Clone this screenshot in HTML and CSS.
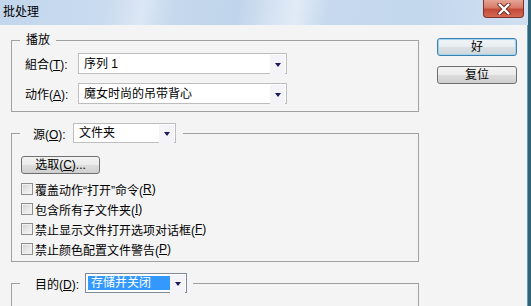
FILE: index.html
```html
<!DOCTYPE html>
<html lang="zh-CN">
<head>
    <meta charset="UTF-8">
    <title>批处理</title>
    <link rel="stylesheet" href="styles.css">
</head>
<body>
    <div class="window">
        <div class="titlebar">
            <span class="title">批处理</span>
            <div class="close-btn">
                <svg width="20" height="12" viewBox="0 0 20 12">
                    <path d="M5.5 1.5 L14.5 10.5 M14.5 1.5 L5.5 10.5" stroke="#6b2a22" stroke-width="4.2" stroke-linecap="round"/>
                    <path d="M5.5 1.5 L14.5 10.5 M14.5 1.5 L5.5 10.5" stroke="#ffffff" stroke-width="2.4" stroke-linecap="round"/>
                </svg>
            </div>
        </div>

        <div class="dialog-body">
            <div class="main-col">
                <!-- 播放 -->
                <fieldset class="group group-play">
                    <legend class="legend-text">播放</legend>
                    <div class="group-inner play-inner">
                        <div class="field-row">
                            <span class="field-label">組合(<u>T</u>):</span>
                            <div class="select select-wide">
                                <span class="select-value">序列 1</span>
                                <span class="select-arrow"></span>
                            </div>
                        </div>
                        <div class="field-row">
                            <span class="field-label">动作(<u>A</u>):</span>
                            <div class="select select-wide">
                                <span class="select-value">魔女时尚的吊带背心</span>
                                <span class="select-arrow"></span>
                            </div>
                        </div>
                    </div>
                </fieldset>

                <!-- 源 -->
                <fieldset class="group group-source">
                    <legend class="legend-field source-legend">
                        <span class="legend-label source-label">源(<u>O</u>):</span>
                        <div class="select select-source">
                            <span class="select-value">文件夹</span>
                            <span class="select-arrow"></span>
                        </div>
                    </legend>
                    <div class="group-inner source-inner">
                        <button class="btn btn-choose">选取(<u>C</u>)...</button>
                        <div class="check-list">
                            <div class="check-row"><span class="checkbox"></span>覆盖动作“打开”命令(<u>R</u>)</div>
                            <div class="check-row"><span class="checkbox"></span>包含所有子文件夹(<u>I</u>)</div>
                            <div class="check-row"><span class="checkbox"></span>禁止显示文件打开选项对话框(<u>F</u>)</div>
                            <div class="check-row"><span class="checkbox"></span>禁止颜色配置文件警告(<u>P</u>)</div>
                        </div>
                    </div>
                </fieldset>

                <!-- 目的 -->
                <fieldset class="group group-dest">
                    <legend class="legend-field dest-legend">
                        <span class="legend-label dest-label">目的(<u>D</u>):</span>
                        <div class="select select-dest">
                            <span class="select-value selected">存储并关闭</span>
                            <span class="select-arrow"></span>
                        </div>
                    </legend>
                    <div class="group-inner dest-inner"></div>
                </fieldset>
            </div>

            <div class="side-col">
                <button class="btn btn-side btn-default">好</button>
                <button class="btn btn-side">复位</button>
            </div>
        </div>
    </div>
</body>
</html>
```

FILE: styles.css
```css
* {
    box-sizing: border-box;
    margin: 0;
    padding: 0;
}

body {
    font-family: "Liberation Sans", "Noto Sans CJK SC", sans-serif;
    font-size: 12px;
    color: #000000;
    background: #f4f4f4;
    width: 531px;
    height: 306px;
    overflow: hidden;
}

u {
    text-decoration: underline;
    text-underline-offset: 1px;
}

.window {
    width: 531px;
    height: 306px;
    background: #f4f4f4;
    border-right: 3px solid #2f6478;
    box-shadow: inset -1px 0 0 #5fa0b8;
    overflow: hidden;
}

/* Title bar */
.titlebar {
    height: 25px;
    display: flex;
    justify-content: space-between;
    align-items: flex-start;
    background: linear-gradient(100deg,
        #c2d6ec 0%, #c9dbef 20%, #dbe7f4 27%, #c5d8ed 33%,
        #c0d4eb 45%, #d7e4f3 52%, #e1ebf6 56%, #c6d9ee 62%,
        #c3d7ed 80%, #d0e0f1 100%);
}

.title {
    padding: 4px 0 0 3px;
    font-size: 12px;
    line-height: 17px;
    color: #000000;
}

.close-btn {
    width: 41px;
    height: 18px;
    margin-right: 4px;
    display: flex;
    align-items: center;
    justify-content: center;
    border: 1px solid #7d3329;
    border-top: none;
    border-radius: 0 0 4px 4px;
    background: linear-gradient(#e6a596 0%, #d77a69 45%, #c44a38 55%, #d66a53 100%);
}

/* Body */
.dialog-body {
    display: flex;
    align-items: flex-start;
    padding: 7px 0 0 11px;
}

.main-col {
    width: 408px;
    display: flex;
    flex-direction: column;
}

.group {
    border: 1px solid #a0a0a0;
    padding: 0;
    min-width: 0;
}

.group + .group {
    margin-top: 11px;
}

legend {
    margin-left: 8px;
}

.legend-text {
    padding: 0 6px;
    line-height: 16px;
}

.legend-field {
    display: flex;
    align-items: center;
    height: 20px;
}

.source-legend {
    padding: 0 7px 0 13px;
}

.source-label {
    width: 40px;
}

.dest-legend {
    padding: 0 6px 0 15px;
}

.dest-label {
    width: 50px;
}

.play-inner {
    padding: 5px 0 7px 13px;
    display: flex;
    flex-direction: column;
    gap: 9px;
}

.field-row {
    display: flex;
    align-items: center;
    height: 21px;
}

.field-label {
    width: 53px;
}

/* Dropdowns */
.select {
    display: flex;
    align-items: center;
    background: #ffffff;
    border: 1px solid #bdbdbd;
    height: 21px;
}

.select-wide {
    width: 209px;
}

.select-source {
    width: 103px;
    height: 20px;
}

.select-dest {
    width: 102px;
    height: 20px;
    border-color: #7f8b99;
}

.select-value {
    flex: 1;
    padding-left: 5px;
    line-height: 16px;
    white-space: nowrap;
}

.select-value.selected {
    flex: 0 0 82px;
    margin-left: 2px;
    padding-left: 3px;
    height: 14px;
    line-height: 14px;
    background: #3399ff;
    color: #ffffff;
}

.select-dest .select-value.selected {
    margin-right: auto;
}

.select-arrow {
    width: 15px;
    height: 100%;
    margin: 1px 1px 1px 0;
    align-self: stretch;
    background: #f4f4f8;
    display: flex;
    align-items: center;
    justify-content: center;
}

.select-arrow::after {
    content: "";
    width: 0;
    height: 0;
    border-top: 4px solid #1a1a5c;
    border-left: 3.5px solid transparent;
    border-right: 3.5px solid transparent;
}

/* Buttons */
.btn {
    font-family: inherit;
    font-size: 12px;
    color: #000000;
    border: 1px solid #707070;
    border-radius: 3px;
    background: linear-gradient(#f3f3f3 0%, #ebebeb 50%, #dddddd 51%, #cfcfcf 100%);
    line-height: 16px;
    text-align: center;
}

.btn-choose {
    width: 79px;
    height: 18px;
}

.side-col {
    display: flex;
    flex-direction: column;
    gap: 10px;
    margin: 6px 0 0 18px;
}

.btn-side {
    width: 80px;
    height: 18px;
}

.btn-default {
    border-color: #3c7fb1;
    box-shadow: inset 0 0 0 1px #9fd6ef;
    background: linear-gradient(#eef4f7 0%, #e8edf0 50%, #dbe1e4 51%, #cfd6da 100%);
}

/* Checkboxes */
.source-inner {
    padding: 13px 0 2px 9px;
}

.check-list {
    margin-top: 5px;
}

.check-row {
    display: flex;
    align-items: center;
    height: 20px;
    white-space: nowrap;
}

.checkbox {
    width: 12px;
    height: 12px;
    margin-right: 2px;
    border: 1px solid #8e8f8f;
    background: linear-gradient(135deg, #cfcfcf 0%, #e6e6e6 50%, #f6f6f6 100%);
    box-shadow: inset 0 0 0 1px #f1f1f1;
}

.dest-inner {
    height: 40px;
}
```
